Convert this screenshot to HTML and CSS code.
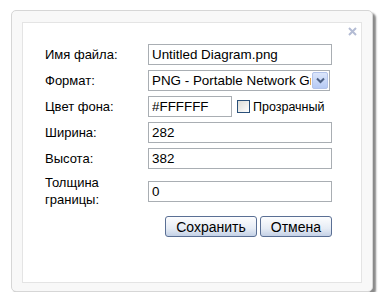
FILE: index.html
```html
<!DOCTYPE html>
<html lang="ru">
<head>
    <meta charset="UTF-8">
    <title>Экспорт</title>
    <link rel="stylesheet" href="styles.css">
</head>
<body>
    <div class="dialog">
        <div class="dialog-body">
            <div class="close">
                <svg width="9" height="9" viewBox="0 0 9 9"><path d="M1 1 L8 8 M8 1 L1 8" stroke="#b4bcd4" stroke-width="2"/></svg>
            </div>
            <table class="form">
                <tr>
                    <td class="label">Имя файла:</td>
                    <td><input class="field" type="text" value="Untitled Diagram.png"></td>
                </tr>
                <tr>
                    <td class="label">Формат:</td>
                    <td>
                        <div class="select">
                            <span class="select-text">PNG - Portable Network Graphics</span>
                            <span class="select-btn">
                                <svg width="9" height="7" viewBox="0 0 9 7"><path d="M1 1.5 L4.5 5 L8 1.5" fill="none" stroke="#4d6185" stroke-width="2"/></svg>
                            </span>
                        </div>
                    </td>
                </tr>
                <tr>
                    <td class="label">Цвет фона:</td>
                    <td class="color-cell">
                        <input class="field short" type="text" value="#FFFFFF">
                        <label class="check"><span class="box"></span>Прозрачный</label>
                    </td>
                </tr>
                <tr>
                    <td class="label">Ширина:</td>
                    <td><input class="field" type="text" value="282"></td>
                </tr>
                <tr>
                    <td class="label">Высота:</td>
                    <td><input class="field" type="text" value="382"></td>
                </tr>
                <tr>
                    <td class="label">Толщина<br>границы:</td>
                    <td><input class="field" type="text" value="0"></td>
                </tr>
            </table>
            <div class="buttons">
                <button class="btn">Сохранить</button>
                <button class="btn">Отмена</button>
            </div>
        </div>
    </div>
</body>
</html>
```

FILE: styles.css
```css
body {
    margin: 0;
    background: #fff;
    font-family: "Liberation Sans", Arial, sans-serif;
    font-size: 13px;
    color: #000;
}
.dialog {
    margin: 10px 0 0 11px;
    width: 362px;
    height: 282px;
    box-sizing: border-box;
    padding: 11px 10px 8px 10px;
    background: #f8f8f8;
    border: 1px solid #d6d6d6;
    border-radius: 5px;
    box-shadow: 3px 3px 2px #8a8a8a;
}
.dialog-body {
    position: relative;
    height: 100%;
    box-sizing: border-box;
    background: #fff;
    border: 1px solid #e4e4e4;
    padding: 19px 0 0 22px;
}
.close {
    position: absolute;
    top: 4px;
    right: 4px;
    line-height: 0;
}
.form {
    border-collapse: collapse;
}
.form td {
    padding: 2px 0 3px;
    vertical-align: middle;
}
.form .label {
    width: 103px;
    line-height: 17px;
}
.field {
    box-sizing: border-box;
    width: 184px;
    height: 21px;
    margin: 0;
    padding: 0 3px;
    border: 1px solid #a9aeb3;
    font-family: inherit;
    font-size: 13.4px;
    color: #000;
    display: block;
}
.field.short {
    width: 84px;
}
.color-cell {
    display: flex;
    align-items: center;
}
.check {
    display: flex;
    align-items: center;
    margin-left: 5px;
    font-size: 12.5px;
}
.box {
    width: 11px;
    height: 11px;
    border: 1px solid #2a5079;
    background: linear-gradient(135deg, #dcdcd6, #fff);
    margin-right: 3px;
}
.select {
    display: flex;
    width: 182px;
    height: 21px;
    box-sizing: border-box;
    border: 1px solid #a9aeb3;
    align-items: stretch;
}
.select-text {
    flex: 1;
    overflow: hidden;
    white-space: nowrap;
    font-size: 13.4px;
    line-height: 19px;
    padding-left: 3px;
}
.select-btn {
    width: 16px;
    margin: 1px;
    background: linear-gradient(#dce6fb, #b6caf4);
    border: 1px solid #b2c3ea;
    border-radius: 2px;
    display: flex;
    align-items: center;
    justify-content: center;
    box-sizing: border-box;
}
.buttons {
    width: 287px;
    display: flex;
    justify-content: flex-end;
    gap: 3px;
    margin-top: 5px;
}
.btn {
    height: 21px;
    padding: 0 10px;
    margin: 0;
    font-family: inherit;
    font-size: 14px;
    border: 1px solid #5a6f94;
    border-radius: 3px;
    background: linear-gradient(#fdfdfe, #e6ecf5 60%, #c4d1e6);
    color: #000;
}
```
